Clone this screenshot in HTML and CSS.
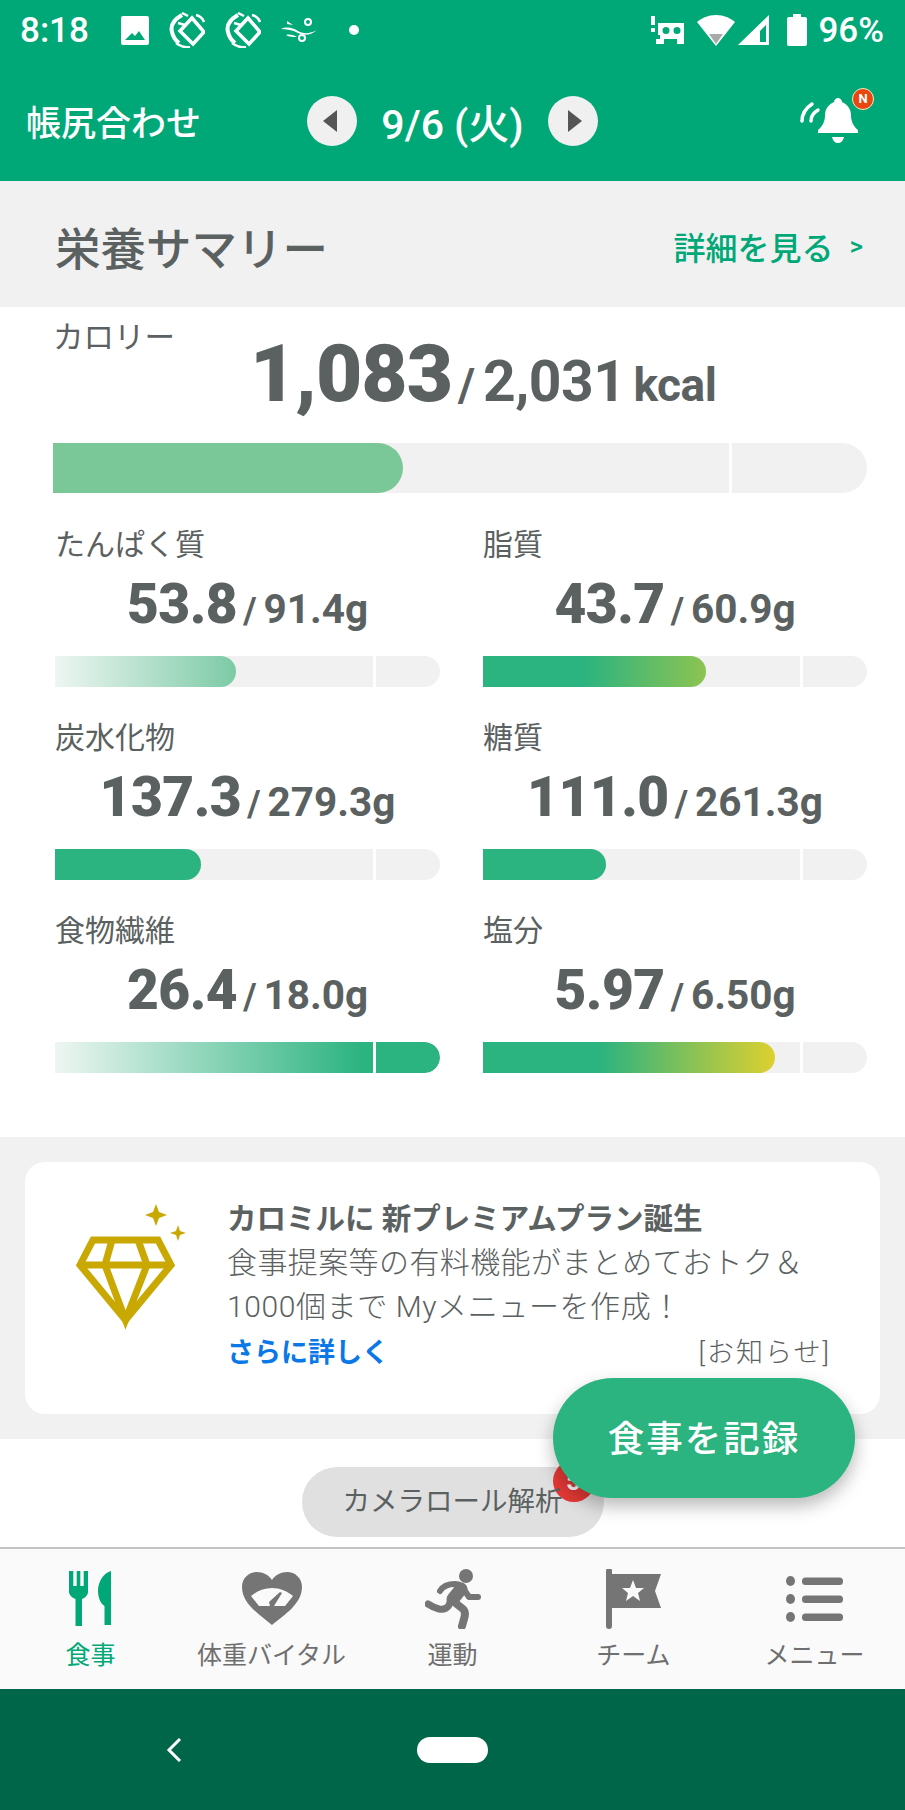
FILE: index.html
```html
<!DOCTYPE html>
<html lang="ja">
<head>
  <meta charset="UTF-8" />
  <meta name="viewport" content="width=device-width, initial-scale=1.0"/>
  <title>栄養サマリー</title>
  <link rel="stylesheet" href="styles.css">
</head>
<body>

<div class="screen">

  <div class="top-area">
    <div class="status-bar">
      <div class="status-left">
        <span class="clock">8:18</span>
        <svg class="st-img" width="28" height="29" viewBox="0 0 28 29"><path fill="#fff" fill-rule="evenodd" d="M2 0h24a2 2 0 0 1 2 2v25a2 2 0 0 1-2 2H2a2 2 0 0 1-2-2V2a2 2 0 0 1 2-2zM4 24h20l-6-9-4 5-3-3z"/></svg>
        <svg width="36" height="36" viewBox="0 0 36 36"><g fill="none" stroke="#fff"><path stroke-width="3.500" d="M23 6L35 20 24 32 11 19z"/><path stroke-width="4" d="M13 3C6 7 1 13 3 20c1 5 3 8 7 11"/><path stroke-width="2.500" d="M9 11l7 2M13 1l6 3M27 3c4 1 7 4 8 7M7 31c4 3 9 5 14 4"/></g></svg>
        <svg width="36" height="36" viewBox="0 0 36 36"><g fill="none" stroke="#fff"><path stroke-width="3.500" d="M23 6L35 20 24 32 11 19z"/><path stroke-width="4" d="M13 3C6 7 1 13 3 20c1 5 3 8 7 11"/><path stroke-width="2.500" d="M9 11l7 2M13 1l6 3M27 3c4 1 7 4 8 7M7 31c4 3 9 5 14 4"/></g></svg>
        <svg width="36" height="24" viewBox="0 0 36 24"><path fill="#fff" d="M0 11c6-3 12-1 17 2s12 3 19-1c-5 5-13 6-19 3S6 11 0 11zM5 17c4-1 8 0 11 2-4 0-8 0-11-2zM6 3l6 4-6-1z"/><circle cx="27" cy="4" r="3" fill="none" stroke="#fff" stroke-width="2"/><circle cx="21" cy="20" r="3" fill="none" stroke="#fff" stroke-width="2"/></svg>
        <span class="st-dot"></span>
      </div>
      <div class="status-right">
        <svg class="st-alert" width="33" height="28" viewBox="0 0 33 28"><path fill="#fff" fill-rule="evenodd" d="M0 0h4v9H0zM0 12h4v4H0zM7 7h26v21h-7v-5H13v5H5v-5h4v-4H7zM15 11a3.500 3.500 0 1 0 0 7 3.500 3.500 0 0 0 0-7zM26 11a3.500 3.500 0 1 0 0 7 3.500 3.500 0 0 0 0-7z"/></svg>
        <svg class="st-wifi" width="38" height="31" viewBox="0 0 38 31"><path fill="#fff" d="M19 0c8 0 14 3 19 7L19 31 0 7c5-4 11-7 19-7z"/><path fill="#a9a9a9" d="M12 19h14l-7 10z"/></svg>
        <svg class="st-signal" width="31" height="30" viewBox="0 0 31 30"><path fill="#fff" fill-rule="evenodd" d="M31 0v30H0zM28 10l-6 6v11h6z"/></svg>
        <svg class="st-batt" width="20" height="32" viewBox="0 0 20 32"><path fill="#fff" d="M6 0h8v3h4a2 2 0 0 1 2 2v25a2 2 0 0 1-2 2H2a2 2 0 0 1-2-2V5a2 2 0 0 1 2-2h4z"/></svg>
        <span class="batt-text">96%</span>
      </div>
    </div>

    <header class="app-header">
      <div class="page-name">帳尻合わせ</div>
      <div class="date-nav">
        <button class="round-btn"><span class="arrow-left"></span></button>
        <span class="date-text">9/6 (火)</span>
        <button class="round-btn"><span class="arrow-right"></span></button>
      </div>
      <div class="bell-box">
        <svg width="58" height="48" viewBox="0 0 58 48"><g fill="none" stroke="#fff" stroke-width="3.500" stroke-linecap="round"><path d="M2 24c0-7 4-13 10-17"/><path d="M11 24c0-4 2-8 7-11"/></g><path fill="#fff" d="M38 1c2 0 4 2 4 4 5 2 9 7 9 13 0 6 2 11 7 15v3H18v-3c5-4 7-9 7-15 0-6 4-11 9-13 0-2 2-4 4-4zM32 40h12c-1 4-3 6-6 6s-5-2-6-6z"/></svg>
        <span class="bell-badge">N</span>
      </div>
    </header>
  </div>

  <section class="summary-head">
    <h2>栄養サマリー</h2>
    <a class="detail-link">詳細を見る<span class="gt">&gt;</span></a>
  </section>

  <section class="summary-body">
    <div class="cal-row">
      <div class="cal-label">カロリー</div>
      <div class="cal-value"><b>1,083</b><i>/</i><em>2,031</em><span>kcal</span></div>
    </div>
    <div class="bar bar-big">
      <div class="fill fill-cal" style="width: 43%"></div>
      <span class="bar-mark"></span>
    </div>

    <div class="macro-grid">
      <div class="macro">
        <div class="macro-label">たんぱく質</div>
        <div class="macro-value"><b>53.8</b><i>/</i><em>91.4g</em></div>
        <div class="bar"><div class="fill fill-fade" style="width: 47%"></div><span class="bar-mark"></span></div>
      </div>
      <div class="macro">
        <div class="macro-label">脂質</div>
        <div class="macro-value"><b>43.7</b><i>/</i><em>60.9g</em></div>
        <div class="bar"><div class="fill fill-lime" style="width: 58%"></div><span class="bar-mark"></span></div>
      </div>
      <div class="macro">
        <div class="macro-label">炭水化物</div>
        <div class="macro-value"><b>137.3</b><i>/</i><em>279.3g</em></div>
        <div class="bar"><div class="fill fill-solid" style="width: 38%"></div><span class="bar-mark"></span></div>
      </div>
      <div class="macro">
        <div class="macro-label">糖質</div>
        <div class="macro-value"><b>111.0</b><i>/</i><em>261.3g</em></div>
        <div class="bar"><div class="fill fill-solid" style="width: 32%"></div><span class="bar-mark"></span></div>
      </div>
      <div class="macro">
        <div class="macro-label">食物繊維</div>
        <div class="macro-value"><b>26.4</b><i>/</i><em>18.0g</em></div>
        <div class="bar"><div class="fill fill-over" style="width: 100%"></div><span class="bar-mark"></span></div>
      </div>
      <div class="macro">
        <div class="macro-label">塩分</div>
        <div class="macro-value"><b>5.97</b><i>/</i><em>6.50g</em></div>
        <div class="bar"><div class="fill fill-yellow" style="width: 76%"></div><span class="bar-mark"></span></div>
      </div>
    </div>
  </section>

  <section class="notice-area">
    <div class="notice-card">
      <svg class="diamond" width="120" height="130" viewBox="0 0 120 130">
        <g fill="none" stroke="#c9a802" stroke-width="7" stroke-linejoin="miter">
          <path d="M23 39H88L101 64 55.500 119 10 64z"/>
          <path d="M10 64H101M42 39L35 64 55.500 119 77 64 68 39"/>
        </g>
        <path fill="#c9a802" d="M86 3l3 8 8 3-8 3-3 8-3-8-8-3 8-3zM108 24l2 6 6 2-6 2-2 6-2-6-6-2 6-2z"/>
      </svg>
      <div class="notice-text">
        <div class="notice-title">カロミルに 新プレミアムプラン誕生</div>
        <p><span class="first-line">食事提案等の有料機能がまとめておトク＆</span><br><span class="wide-line">1000個まで Myメニューを作成！</span></p>
        <div class="notice-foot">
          <a class="more-link">さらに詳しく</a>
          <span class="notice-tag">[お知らせ]</span>
        </div>
      </div>
    </div>
  </section>

  <section class="camera-area">
    <div class="camera-pill">
      <span class="camera-badge">5</span>
      <span class="camera-text">カメラロール解析</span>
    </div>
  </section>

  <button class="record-btn">食事を記録</button>

  <nav class="tab-bar">
    <div class="tab tab-on">
      <svg width="44" height="56" viewBox="0 0 44 56"><path fill="#00a877" d="M0 0h4.300v15h3.400V0h3.600v15h3.400V0H19v21c0 3-3 6-6 7v27H6.500V28c-3-1-6.500-4-6.500-7zM42 0v54h-6.500V35C32 33 29 27 29 20 29 10 35 2 42 0z"/></svg>
      <span>食事</span>
    </div>
    <div class="tab">
      <svg width="60" height="54" viewBox="0 0 60 54"><path fill="#757575" fill-rule="evenodd" d="M30 53C18 43 0 32 0 15 0 6 7 0 15 0c6 0 12 3 15 8 3-5 9-8 15-8 8 0 15 6 15 15 0 17-18 28-30 38zM9 24l8 10h26l8-10c-6-5-13-8-21-8S15 19 9 24z"/><path fill="#757575" d="M27 30l11-10 2 1-8 13h-4z"/></svg>
      <span>体重バイタル</span>
    </div>
    <div class="tab">
      <svg width="56" height="60" viewBox="0 0 56 60"><circle cx="41" cy="7" r="7" fill="#757575"/><g fill="none" stroke="#757575" stroke-linecap="round" stroke-linejoin="round"><path stroke-width="13" d="M36 20L28 30"/><path stroke-width="6" d="M15 22c3-5 8-7 15-7 5 0 8 2 10 7l4 6 9 0"/><path stroke-width="8" d="M28 32l10 8c3 3 2 7 1 10l-2 7"/><path stroke-width="7" d="M25 33c-1 6-6 8-11 7-4-1-8-3-11-5"/></g></svg>
      <span>運動</span>
    </div>
    <div class="tab">
      <svg width="56" height="60" viewBox="0 0 56 60"><path fill="#757575" fill-rule="evenodd" d="M0 2a3 3 0 0 1 6 0v3h49l-6 17 6 17H6v18a3 3 0 0 1-6 0zM27 11l-3 8h-8l6 5-2 8 7-5 7 5-2-8 6-5h-8z"/></svg>
      <span>チーム</span>
    </div>
    <div class="tab">
      <svg width="58" height="46" viewBox="0 0 58 46"><g fill="#757575"><ellipse cx="4.500" cy="5" rx="4.500" ry="5"/><ellipse cx="4.500" cy="23" rx="4.500" ry="5"/><ellipse cx="4.500" cy="41" rx="4.500" ry="5"/><rect x="16" y="1.500" width="41" height="7.500" rx="3.500"/><rect x="16" y="19.500" width="41" height="7.500" rx="3.500"/><rect x="16" y="37.500" width="41" height="7.500" rx="3.500"/></g></svg>
      <span>メニュー</span>
    </div>
  </nav>

  <div class="system-nav">
    <svg class="sys-back" width="16" height="24" viewBox="0 0 16 24"><path fill="none" stroke="#fff" stroke-width="3" d="M14 1L3 12l11 11"/></svg>
    <span class="sys-home"></span>
  </div>

</div>

</body>
</html>
```

FILE: styles.css
```css
html, body {
  margin: 0;
  padding: 0;
  background: white;
}

.screen {
  position: relative;
  width: 905px;
  height: 1810px;
  overflow: hidden;
  font-family: Roboto, "Noto Sans CJK JP", sans-serif;
  color: #5b6161;
}

/* status bar + app header */
.top-area {
  height: 181px;
  background: #00a877;
  color: white;
}

.status-bar {
  height: 60px;
  display: flex;
  justify-content: space-between;
  align-items: center;
  padding: 0 21px 0 20px;
}

.status-left,
.status-right {
  display: flex;
  align-items: center;
}

.status-left {
  gap: 20px;
}

.clock {
  font-size: 35px;
  font-weight: 500;
  width: 69px;
  white-space: nowrap;
}

.st-img {
  margin-left: 12px;
}

.st-dot {
  width: 10px;
  height: 10px;
  margin-left: 12px;
  border-radius: 50%;
  background: white;
}

.st-wifi {
  margin-left: 13px;
}

.st-signal {
  margin-left: 3px;
}

.st-batt {
  margin-left: 18px;
}

.batt-text {
  margin-left: 11px;
  font-size: 35px;
  font-weight: 500;
}

.app-header {
  height: 121px;
  display: flex;
  align-items: center;
  padding: 0 27px 0 26px;
  box-sizing: border-box;
}

.page-name {
  width: 281px;
  font-size: 35px;
  font-weight: 500;
}

.date-nav {
  display: flex;
  align-items: center;
  gap: 16px;
}

.date-text {
  width: 159px;
  text-align: center;
  font-size: 41px;
  font-weight: 500;
  white-space: nowrap;
}

.round-btn {
  width: 50px;
  height: 50px;
  padding: 0;
  border: none;
  border-radius: 50%;
  background: #f0f0f0;
  display: flex;
  align-items: center;
  justify-content: center;
}

.arrow-left,
.arrow-right {
  width: 0;
  height: 0;
  border-top: 11px solid transparent;
  border-bottom: 11px solid transparent;
}

.arrow-left {
  border-right: 14px solid #555;
  margin-right: 4px;
}

.arrow-right {
  border-left: 14px solid #555;
  margin-left: 4px;
}

.bell-box {
  position: relative;
  margin-left: auto;
  margin-right: 20px;
  height: 48px;
}

.bell-badge {
  position: absolute;
  top: -9px;
  right: -16px;
  width: 22px;
  height: 22px;
  box-sizing: border-box;
  border-radius: 50%;
  border: 1.500px solid #f5e9c8;
  background: #e8470f;
  color: white;
  font-size: 13px;
  font-weight: 700;
  line-height: 19px;
  text-align: center;
}

/* gray title strip */
.summary-head {
  height: 126px;
  background: #f1f1f1;
  display: flex;
  align-items: center;
  justify-content: space-between;
  padding: 3px 42px 0 55px;
  box-sizing: border-box;
}

.summary-head h2 {
  margin: 0;
  font-size: 45.500px;
  font-weight: 500;
}

.detail-link {
  color: #00a877;
  font-size: 32px;
  font-weight: 500;
  display: flex;
  align-items: center;
}

.gt {
  margin-left: 16px;
  font-size: 26px;
}

/* calorie + macros */
.summary-body {
  height: 830px;
  padding: 0 38px 0 53px;
  box-sizing: border-box;
}

.cal-row {
  display: flex;
  height: 136px;
}

.cal-label {
  width: 197px;
  padding-top: 9px;
  font-size: 30.500px;
  line-height: 44px;
}

.cal-value {
  padding-top: 22px;
  font-weight: 700;
  line-height: 90px;
  white-space: nowrap;
}

.cal-value b {
  font-size: 80px;
  letter-spacing: -1px;
}

.cal-value i {
  font-style: normal;
  font-size: 46px;
  margin: 0 8px 0 6px;
}

.cal-value em {
  font-style: normal;
  font-size: 57px;
  letter-spacing: -0.5px;
}

.cal-value span {
  margin-left: 8px;
  font-size: 46px;
  letter-spacing: -0.5px;
}

.bar {
  position: relative;
  height: 31px;
  background: #f1f1f1;
  border-radius: 0 16px 16px 0;
  overflow: hidden;
}

.bar-big {
  height: 50px;
  border-radius: 0 25px 25px 0;
}

.fill {
  height: 100%;
  border-radius: 0 16px 16px 0;
}

.fill-cal {
  background: #7ac898;
  border-radius: 0 25px 25px 0;
}

.fill-solid {
  background: #2bb380;
}

.fill-fade {
  background: linear-gradient(90deg, #eef6f2, #7ccaa6);
}

.fill-over {
  background: linear-gradient(90deg, #eef6f2, #2bb380 80%);
}

.fill-lime {
  background: linear-gradient(90deg, #2bb380 45%, #8cc452);
}

.fill-yellow {
  background: linear-gradient(90deg, #2bb380 40%, #ddd02f);
}

.bar-mark {
  position: absolute;
  top: 0;
  bottom: 0;
  left: 82.500%;
  width: 3px;
  background: white;
}

.bar-big .bar-mark {
  left: 83%;
}

.macro-grid {
  display: grid;
  grid-template-columns: 385px 384px;
  column-gap: 43px;
  margin: 30px 0 0 2px;
}

.macro {
  height: 193px;
}

.macro-label {
  font-size: 30px;
  line-height: 44px;
}

.macro-value {
  text-align: center;
  font-weight: 700;
  height: 89px;
  line-height: 75px;
  white-space: nowrap;
}

.macro-value b {
  font-size: 55px;
  letter-spacing: -0.5px;
}

.macro-value i {
  font-style: normal;
  font-size: 36px;
  margin: 0 7px 0 6px;
}

.macro-value em {
  font-style: normal;
  font-size: 40.500px;
}

/* notice card */
.notice-area {
  height: 302px;
  background: #f1f1f1;
  padding: 25px 25px 0;
  box-sizing: border-box;
}

.notice-card {
  height: 252px;
  background: white;
  border-radius: 20px;
  display: flex;
  padding: 40px 0 0 45px;
  box-sizing: border-box;
}

.diamond {
  width: 120px;
  flex: none;
  margin-top: -1px;
}

.notice-text {
  margin-left: 37px;
  width: 604px;
}

.notice-title {
  font-size: 29.500px;
  font-weight: 700;
  line-height: 34px;
}

.notice-text p {
  margin: 5px 0 0;
  font-size: 30px;
  font-weight: 300;
  line-height: 44px;
}

.first-line {
  letter-spacing: 0.4px;
}

.wide-line {
  letter-spacing: 0.6px;
}

.notice-foot {
  display: flex;
  justify-content: space-between;
  align-items: center;
  margin-top: 2px;
}

.more-link {
  color: #0a78e6;
  font-size: 27px;
  font-weight: 700;
}

.notice-tag {
  font-size: 27px;
  font-weight: 300;
  letter-spacing: 2px;
}

/* camera roll pill under the card */
.camera-area {
  height: 108px;
  padding-top: 28px;
  box-sizing: border-box;
  display: flex;
  justify-content: center;
}

.camera-pill {
  position: relative;
  width: 302px;
  height: 70px;
  border-radius: 35px;
  background: #e0e0e0;
  font-size: 27.500px;
  line-height: 70px;
  text-align: center;
}

.camera-text {
  position: relative;
}

.camera-badge {
  position: absolute;
  top: -7px;
  right: 9px;
  width: 42px;
  height: 42px;
  border-radius: 50%;
  background: #e53935;
  color: white;
  font-size: 26px;
  font-weight: 700;
  line-height: 42px;
}

.record-btn {
  position: absolute;
  left: 553px;
  top: 1378px;
  width: 302px;
  height: 120px;
  padding: 0 0 3px;
  border: none;
  border-radius: 60px;
  background: #2bb380;
  color: white;
  font-family: inherit;
  font-size: 36.500px;
  font-weight: 500;
  letter-spacing: 2px;
  box-shadow: 0 8px 18px rgba(0, 0, 0, 0.28);
}

/* bottom tabs */
.tab-bar {
  height: 142px;
  box-sizing: border-box;
  border-top: 2px solid #c4c4c4;
  background: #fafafa;
  display: grid;
  grid-template-columns: repeat(5, 1fr);
}

.tab {
  display: flex;
  flex-direction: column;
  align-items: center;
  color: #6f6f6f;
  font-size: 25px;
}

.tab svg {
  height: 60px;
  margin-top: 20px;
}

.tab span {
  margin-top: 9px;
  line-height: 36px;
}

.tab-on {
  color: #00a877;
}

.system-nav {
  height: 121px;
  background: #00664a;
  display: flex;
  align-items: center;
  padding-left: 166px;
  box-sizing: border-box;
}

.sys-home {
  width: 71px;
  height: 26px;
  margin-left: 235px;
  border-radius: 13px;
  background: white;
}
```
